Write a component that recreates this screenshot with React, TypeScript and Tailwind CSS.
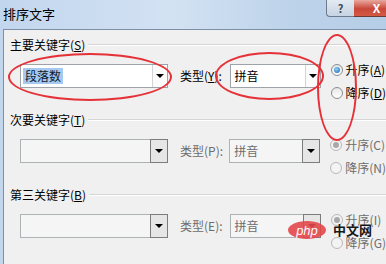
type ComboProps = {
  width: string;
  text?: string;
  selected?: boolean;
  disabled?: boolean;
};

function Arrow() {
  return <div className="h-0 w-0 border-l-[4px] border-r-[4px] border-t-[4px] border-l-transparent border-r-transparent border-t-black" />;
}

function Combo({ width, text, selected, disabled }: ComboProps) {
  return (
    <div
      className={`flex h-[24px] ${width} border ${
        disabled ? "border-[#adb2b5] bg-[#f5f5f5]" : "border-[#9ea3a9] bg-white"
      }`}
    >
      <div className="flex flex-1 items-center pl-[2px] text-[12px]">
        {text && (
          <span
            className={`px-[2px] leading-[16px] ${
              selected ? "bg-[#a5c9ef] text-[#0b1a33]" : disabled ? "text-[#6d6d6d]" : "text-black"
            }`}
          >
            {text}
          </span>
        )}
      </div>
      {disabled ? (
        <div className="-my-px -mr-px flex w-[18px] items-center justify-center border border-[#7c7c7c] bg-[#e6e6e6]">
          <Arrow />
        </div>
      ) : (
        <div className="flex w-[15px] items-center justify-center border-l border-[#d2d4d8] bg-[#fbfbfb]">
          <Arrow />
        </div>
      )}
    </div>
  );
}

function Radio({ label, hot, checked, disabled }: { label: string; hot: string; checked?: boolean; disabled?: boolean }) {
  return (
    <div className="flex h-[14px] items-center">
      <div
        className={`flex h-[12px] w-[12px] items-center justify-center rounded-full border ${
          disabled ? "border-[#b8b8b8] bg-[#f3f3f3]" : "border-[#8a8d90] bg-[linear-gradient(180deg,#e6e6e6,#ffffff)]"
        }`}
      >
        {checked && (
          <div
            className={`h-[6px] w-[6px] rounded-full ${
              disabled ? "bg-[#a8a8a8]" : "bg-[radial-gradient(circle_at_40%_35%,#8fd3f7,#1d5fa8)]"
            }`}
          />
        )}
      </div>
      <span className={`ml-[3px] whitespace-nowrap text-[12px] leading-[14px] ${disabled ? "text-[#6d6d6d]" : "text-black"}`}>
        {label}(
        {disabled ? hot : <span className="underline">{hot}</span>})
      </span>
    </div>
  );
}

type SectionProps = {
  label: string;
  hot: string;
  typeHot: string;
  first?: boolean;
  up: string;
  down: string;
};

function Section({ label, hot, typeHot, first, up, down }: SectionProps) {
  return (
    <div className={first ? "mt-[7px]" : "mt-[12px]"}>
      <div className="flex h-[16px] items-center pl-[6px]">
        <span className="whitespace-nowrap text-[12px] leading-[16px] text-black">
          {label}(<span className="underline">{hot}</span>)
        </span>
        <div className="ml-[3px] h-[2px] flex-1 border-t border-b border-t-[#d5d5d5] border-b-white" />
      </div>
      <div className="mt-[10px] flex items-start pl-[16px]">
        <div className="mt-[1px]">
          <Combo width="w-[148px]" text={first ? "段落数" : undefined} selected={first} disabled={!first} />
        </div>
        <div
          className={`ml-[12px] mt-[6px] w-[51px] whitespace-nowrap text-[12px] leading-[14px] ${
            first ? "text-black" : "text-[#6d6d6d]"
          }`}
        >
          类型({first ? <span className="underline">{typeHot}</span> : typeHot}):
        </div>
        <div className="mt-[1px]">
          <Combo width="w-[91px]" text="拼音" disabled={!first} />
        </div>
        <div className="ml-[10px] flex flex-col gap-[9px]">
          <Radio label="升序" hot={up} checked disabled={!first} />
          <Radio label="降序" hot={down} disabled={!first} />
        </div>
      </div>
    </div>
  );
}

export default function App() {
  return (
    <div className="relative h-[264px] w-[386px] overflow-hidden bg-[linear-gradient(90deg,#c2d6ee_0%,#d3e2f3_45%,#bdd3ea_75%,#b6cde7_100%)] font-['Noto_Sans_CJK_SC','Microsoft_YaHei',sans-serif] text-black">
      <div className="flex h-[29px] items-start">
        <div className="pl-[3px] pt-[6px] text-[13px] leading-[16px] text-black">排序文字</div>
        <div className="flex-1" />
        <div className="-mr-[14px] flex">
          <div className="flex h-[17px] w-[28px] items-center justify-center rounded-bl-[4px] border-b border-l border-[#6c7a8c] bg-[linear-gradient(180deg,#e3eaf2,#c6d3e2)] text-[11px] font-bold leading-none text-[#3b4655]">
            ?
          </div>
          <div className="flex h-[17px] w-[46px] items-center justify-center rounded-br-[4px] border-b border-r border-[#6b3a36] bg-[linear-gradient(180deg,#e8a99f,#c9473a_55%,#d35a45)] text-[12px] font-bold leading-none text-white">
            X
          </div>
        </div>
      </div>
      <div className="ml-[3px] h-[235px] border-l border-t border-[#7d8fa6] bg-[#f0f0f0]">
        <Section label="主要关键字" hot="S" typeHot="Y" first up="A" down="D" />
        <Section label="次要关键字" hot="T" typeHot="P" up="C" down="N" />
        <Section label="第三关键字" hot="B" typeHot="E" up="I" down="G" />
      </div>

      {/* red annotation marks */}
      <div className="absolute left-[8px] top-[53px] h-[48px] w-[164px] rounded-[50%] border-[2px] border-[#e53238]" />
      <div className="absolute left-[215px] top-[52px] h-[48px] w-[109px] rounded-[50%] border-[2px] border-[#e53238]" />
      <div className="absolute left-[317px] top-[34px] h-[107px] w-[40px] rounded-[50%] border-[2px] border-[#e53238]" />

      {/* watermark */}
      <div className="absolute left-[288px] top-[221px] flex items-center opacity-90">
        <div className="flex h-[18px] w-[38px] items-center justify-center rounded-[50%] bg-[#e4484c] font-['Liberation_Sans',sans-serif] text-[13px] italic leading-none text-white">
          php
        </div>
        <div className="ml-[7px] text-[13px] font-bold leading-[14px] text-black">中文网</div>
      </div>
    </div>
  );
}
